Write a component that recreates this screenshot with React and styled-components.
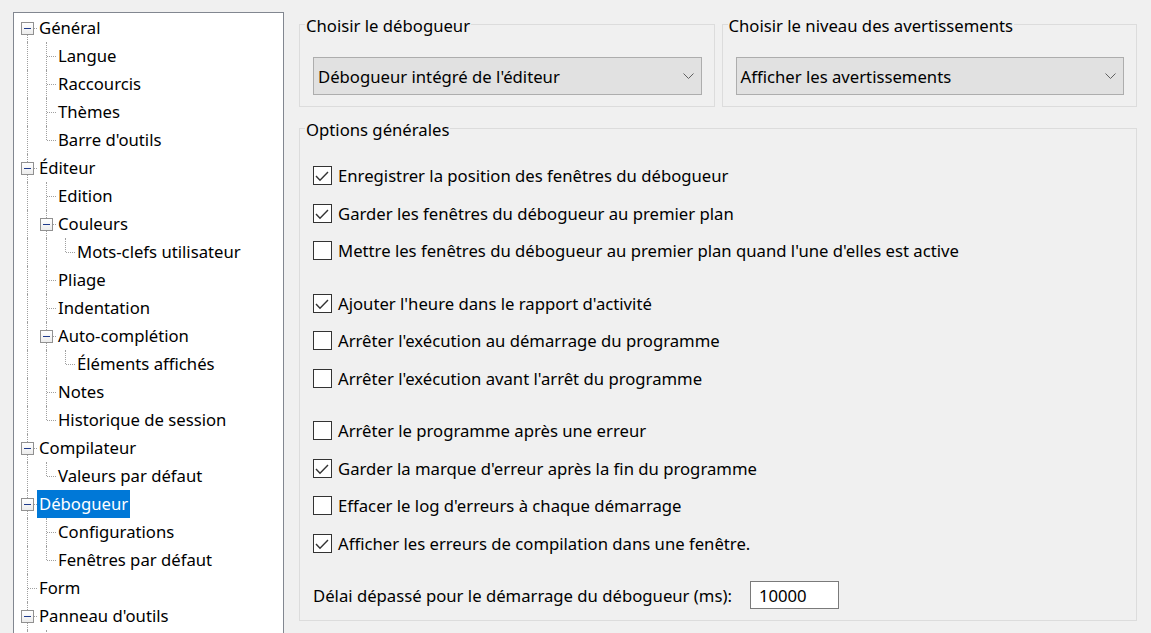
import styled, { createGlobalStyle } from 'styled-components';

const GlobalStyle = createGlobalStyle`
  html, body {
    margin: 0;
    padding: 0;
    height: 100%;
    overflow: hidden;
    background: #f0f0f0;
  }
  body {
    font-family: "Noto Sans", "Liberation Sans", sans-serif;
    font-size: 16.7px;
    color: #000;
  }
`;

const Window = styled.div`
  display: flex;
  align-items: flex-start;
  gap: 15px;
  padding: 12px 14px 0 13px;
  height: 633px;
  box-sizing: border-box;
  overflow: hidden;
`;

const TreePanel = styled.div`
  flex: none;
  width: 271px;
  height: 640px;
  box-sizing: border-box;
  padding: 1px 0 0 4px;
  background: #fff;
  border: 1px solid #828790;
  overflow: hidden;
`;

const TreeRow = styled.div`
  display: flex;
  height: 28px;
`;

const Guide = styled.span`
  position: relative;
  flex: none;
  width: 19px;
  height: 100%;

  &::before {
    content: '';
    display: ${(p) => (p.$line ? 'block' : 'none')};
    position: absolute;
    left: 9px;
    top: 0;
    bottom: 0;
    border-left: 1px dotted #a0a0a0;
  }
`;

const Joint = styled.span`
  position: relative;
  flex: none;
  width: 19px;
  height: 100%;

  &::before {
    content: '';
    position: absolute;
    left: 9px;
    top: ${(p) => (p.$top ? '0' : '50%')};
    bottom: ${(p) => (p.$bottom ? '0' : '50%')};
    border-left: 1px dotted #a0a0a0;
  }

  &::after {
    content: '';
    position: absolute;
    left: 10px;
    right: 0;
    top: 14px;
    border-top: 1px dotted #a0a0a0;
  }
`;

const Expander = styled.span`
  position: absolute;
  z-index: 1;
  left: 3px;
  top: 8px;
  width: 13px;
  height: 13px;
  box-sizing: border-box;
  border: 1px solid #919191;
  background: linear-gradient(#ffffff, #ececec);
  display: flex;
  align-items: center;
  justify-content: center;

  &::before {
    content: '';
    width: 7px;
    height: 1px;
    background: #1f3b8c;
  }
`;

const NodeLabel = styled.span`
  padding: 0 2px;
  line-height: 28px;
  white-space: nowrap;
  background: ${(p) => (p.$selected ? '#0078d7' : 'transparent')};
  color: ${(p) => (p.$selected ? '#fff' : '#000')};
`;

const Settings = styled.div`
  flex: 1;
  min-width: 0;
  margin-top: 1px;
  display: flex;
  flex-direction: column;
  gap: 10px;
`;

const TopRow = styled.div`
  display: grid;
  grid-template-columns: 1fr 1fr;
  gap: 7px;
`;

const Group = styled.fieldset`
  margin: 0;
  min-width: 0;
  padding: 0 12px 11px 13px;
  border: 1px solid #dcdcdc;
`;

const Legend = styled.legend`
  margin-left: -8px;
  padding: 3px 1px 0;
  line-height: 20px;
`;

const Select = styled.div`
  margin-top: 21px;
  height: 38px;
  box-sizing: border-box;
  display: flex;
  align-items: center;
  justify-content: space-between;
  padding: 0 7px 0 4px;
  background: #e1e1e1;
  border: 1px solid #adadad;
  white-space: nowrap;
`;

const OptionList = styled.div`
  padding-top: 17px;
`;

const Section = styled.div`
  & + & {
    margin-top: 15px;
  }
`;

const CheckRow = styled.label`
  display: flex;
  align-items: center;
  gap: 6px;
  height: 37.5px;
  white-space: nowrap;
`;

const Box = styled.span`
  flex: none;
  width: 19px;
  height: 19px;
  box-sizing: border-box;
  border: 1px solid #333;
  background: #fff;
  display: flex;
`;

const TimeoutRow = styled.div`
  display: flex;
  align-items: center;
  gap: 18px;
  margin-top: 19px;
  white-space: nowrap;
`;

const NumberField = styled.div`
  width: 89px;
  height: 28px;
  box-sizing: border-box;
  padding: 0 8px;
  display: flex;
  align-items: center;
  background: #fff;
  border: 1px solid #7a7a7a;
`;

// rows past the bottom edge only show their connector lines
const tree = [
  {
    label: 'Général',
    children: [{ label: 'Langue' }, { label: 'Raccourcis' }, { label: 'Thèmes' }, { label: "Barre d'outils" }],
  },
  {
    label: 'Éditeur',
    children: [
      { label: 'Edition' },
      { label: 'Couleurs', children: [{ label: 'Mots-clefs utilisateur' }] },
      { label: 'Pliage' },
      { label: 'Indentation' },
      { label: 'Auto-complétion', children: [{ label: 'Éléments affichés' }] },
      { label: 'Notes' },
      { label: 'Historique de session' },
    ],
  },
  { label: 'Compilateur', children: [{ label: 'Valeurs par défaut' }] },
  {
    label: 'Débogueur',
    selected: true,
    children: [{ label: 'Configurations' }, { label: 'Fenêtres par défaut' }],
  },
  { label: 'Form' },
  { label: "Panneau d'outils", children: [{ label: '' }] },
  { label: '' },
];

function flatten(nodes, depth = 0, guides = [], out = []) {
  nodes.forEach((n, i) => {
    const last = i === nodes.length - 1;
    out.push({
      label: n.label,
      guides,
      first: depth === 0 && i === 0,
      last,
      box: !!n.children,
      selected: n.selected,
    });
    if (n.children) flatten(n.children, depth + 1, [...guides, !last], out);
  });
  return out;
}

const sections = [
  [
    ['Enregistrer la position des fenêtres du débogueur', true],
    ['Garder les fenêtres du débogueur au premier plan', true],
    ["Mettre les fenêtres du débogueur au premier plan quand l'une d'elles est active", false],
  ],
  [
    ["Ajouter l'heure dans le rapport d'activité", true],
    ["Arrêter l'exécution au démarrage du programme", false],
    ["Arrêter l'exécution avant l'arrêt du programme", false],
  ],
  [
    ['Arrêter le programme après une erreur', false],
    ["Garder la marque d'erreur après la fin du programme", true],
    ["Effacer le log d'erreurs à chaque démarrage", false],
    ['Afficher les erreurs de compilation dans une fenêtre.', true],
  ],
];

const Chevron = () => (
  <svg width="11" height="6" viewBox="0 0 11 6">
    <polyline points="0.5,0.5 5.5,5.5 10.5,0.5" fill="none" stroke="#606060" strokeWidth="1" />
  </svg>
);

const Check = () => (
  <svg width="17" height="17" viewBox="0 0 17 17">
    <polyline points="2,9 6,13.3 14,5" fill="none" stroke="#333" strokeWidth="1.4" />
  </svg>
);

export default function App() {
  const rows = flatten(tree);
  return (
    <>
      <GlobalStyle />
      <Window>
        <TreePanel>
          {rows.map((r, i) => (
            <TreeRow key={i}>
              {r.guides.map((g, j) => (
                <Guide key={j} $line={g} />
              ))}
              <Joint $top={!r.first} $bottom={!r.last}>
                {r.box && <Expander />}
              </Joint>
              {r.label && <NodeLabel $selected={r.selected}>{r.label}</NodeLabel>}
            </TreeRow>
          ))}
        </TreePanel>

        <Settings>
          <TopRow>
            <Group>
              <Legend>Choisir le débogueur</Legend>
              <Select>
                <span>Débogueur intégré de l'éditeur</span>
                <Chevron />
              </Select>
            </Group>
            <Group>
              <Legend>Choisir le niveau des avertissements</Legend>
              <Select>
                <span>Afficher les avertissements</span>
                <Chevron />
              </Select>
            </Group>
          </TopRow>

          <Group>
            <Legend>Options générales</Legend>
            <OptionList>
              {sections.map((s, i) => (
                <Section key={i}>
                  {s.map(([text, checked]) => (
                    <CheckRow key={text}>
                      <Box>{checked && <Check />}</Box>
                      {text}
                    </CheckRow>
                  ))}
                </Section>
              ))}
              <TimeoutRow>
                <span>Délai dépassé pour le démarrage du débogueur (ms):</span>
                <NumberField>10000</NumberField>
              </TimeoutRow>
            </OptionList>
          </Group>
        </Settings>
      </Window>
    </>
  );
}
